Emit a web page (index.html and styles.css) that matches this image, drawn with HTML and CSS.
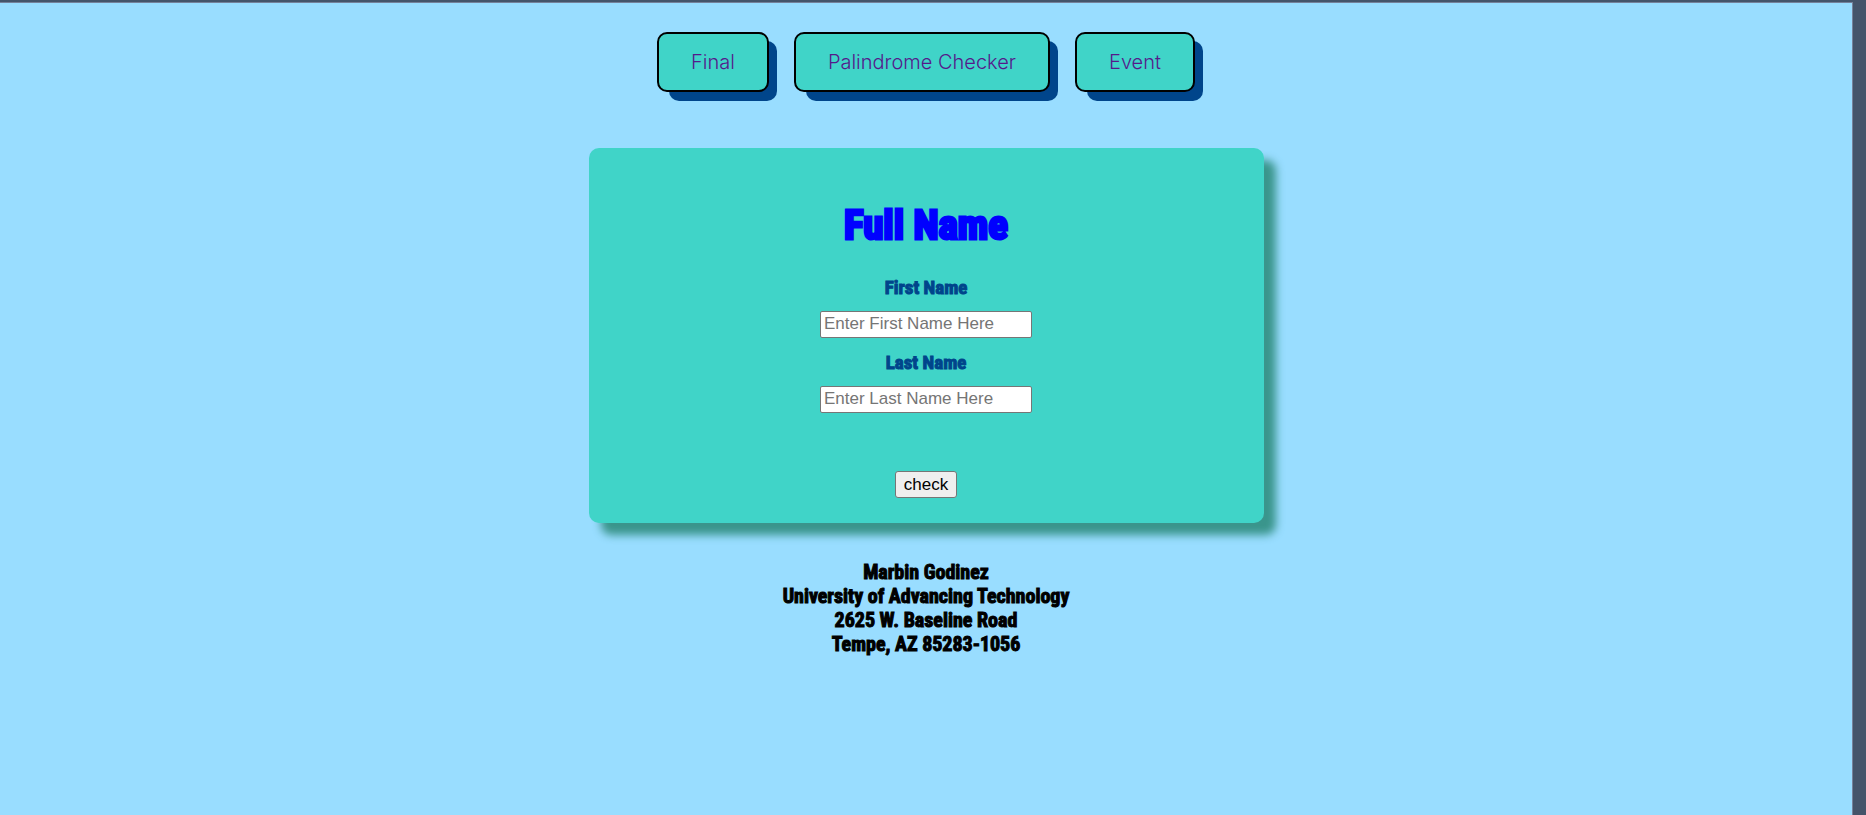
FILE: index.html
```html
<!DOCTYPE html>
<html lang="en">
<head>
<meta charset="utf-8">
<meta name="viewport" content="width=device-width, initial-scale=1">
<title>Full Name</title>
<link rel="stylesheet" href="styles.css">
</head>
<body>
<div class="page">
  <nav class="nav">
    <a class="nav-link" href="#final">Final</a>
    <a class="nav-link" href="#palindrome">Palindrome Checker</a>
    <a class="nav-link" href="#event">Event</a>
  </nav>
  <main class="card">
    <h1 class="title">Full Name</h1>
    <form class="form">
      <label class="label" for="first">First Name</label>
      <input class="field" id="first" type="text" placeholder="Enter First Name Here">
      <label class="label" for="last">Last Name</label>
      <input class="field" id="last" type="text" placeholder="Enter Last Name Here">
      <button class="check" type="button">check</button>
    </form>
  </main>
  <footer class="footer">
    Marbin Godinez<br>
    University of Advancing Technology<br>
    2625 W. Baseline Road<br>
    Tempe, AZ 85283-1056
  </footer>
</div>
</body>
</html>
```
FILE: styles.css
```css
* {
  box-sizing: border-box;
}

body {
  margin: 0;
  min-height: 100vh;
  display: flex;
  padding: 2px 13px 0 0;
  background: #44546a;
  font-family: Impact, Haettenschweiler, "Roboto Condensed", "Arial Narrow", "Liberation Sans", sans-serif;
}

.page {
  flex: 1;
  display: flex;
  flex-direction: column;
  align-items: center;
  padding: 29px 16px 0;
  border-top: 1px solid #75819a;
  border-right: 1px solid #75819a;
  background: #99ddff;
}

.nav {
  display: flex;
  flex-wrap: wrap;
  justify-content: center;
  gap: 25px;
  position: relative;
  z-index: 0;
}

.nav-link {
  position: relative;
  padding: 16px 32px;
  border: 2px solid #000;
  border-radius: 10px;
  background: #40d4c8;
  color: #551a8b;
  font: 300 20px/24px Inter, sans-serif;
  text-decoration: none;
}

.nav-link::after {
  content: "";
  position: absolute;
  z-index: -1;
  inset: 7px -10px -11px 10px;
  border-radius: 10px;
  background: #00458b;
}

.card {
  width: 100%;
  max-width: 675px;
  margin-top: 56px;
  padding: 49px 24px 25px;
  border-radius: 10px;
  background: #40d4c8;
  box-shadow: 12px 12px 8px #3a958c;
  text-align: center;
}

.title {
  margin: 0;
  color: #0000ff;
  font-size: 41px;
  line-height: 56px;
  -webkit-text-stroke: 3px #0000ff;
}

.form {
  display: flex;
  flex-direction: column;
  align-items: center;
}

.label {
  margin-top: 23px;
  color: #00458b;
  font-size: 19px;
  font-weight: bold;
  line-height: 24px;
  -webkit-text-stroke: 1px #00458b;
}

.field {
  width: 212px;
  height: 27px;
  margin-top: 11px;
  padding: 0 3px 2px;
  border: 1px solid #767676;
  border-radius: 2px;
  background: #fff;
  font: 17px "Liberation Sans", sans-serif;
}

.field + .label {
  margin-top: 13px;
}

.field::placeholder {
  color: #757575;
}

.check {
  height: 27px;
  margin-top: 58px;
  padding: 1px 8px;
  border: 1px solid #767676;
  border-radius: 3px;
  background: #efefef;
  color: #000;
  font: 17px "Liberation Sans", sans-serif;
}

.footer {
  margin-top: 37px;
  color: #000;
  font-size: 20px;
  font-weight: bold;
  line-height: 24px;
  text-align: center;
  -webkit-text-stroke: 1px #000;
}
```
